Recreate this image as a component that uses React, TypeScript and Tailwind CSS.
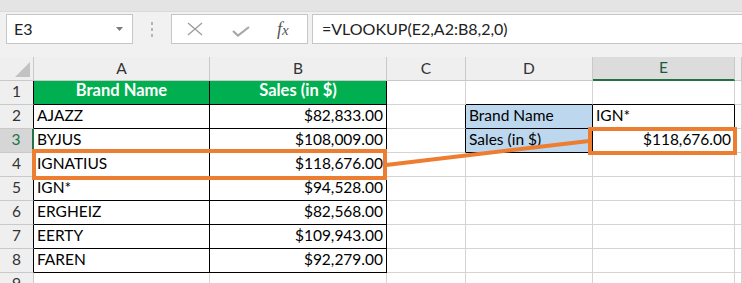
const data: string[][] = [
  ["Brand Name", "Sales (in $)", "", "", ""],
  ["AJAZZ", "$82,833.00", "", "Brand Name", "IGN*"],
  ["BYJUS", "$108,009.00", "", "Sales (in $)", "$118,676.00"],
  ["IGNATIUS", "$118,676.00", "", "", ""],
  ["IGN*", "$94,528.00", "", "", ""],
  ["ERGHEIZ", "$82,568.00", "", "", ""],
  ["EERTY", "$109,943.00", "", "", ""],
  ["FAREN", "$92,279.00", "", "", ""],
  ["", "", "", "", ""],
];

const letters = ["A", "B", "C", "D", "E", ""];

// r: 1-based row, c: 0=A .. 5=F
const cellBorders = (r: number, c: number) => {
  const inTable = r >= 1 && r <= 8 && c <= 1;
  const inLookup = (r === 2 || r === 3) && (c === 3 || c === 4);
  const rightBlack =
    inTable || inLookup || (c === 2 && (r === 2 || r === 3));
  const bottomBlack =
    inTable || inLookup || (r === 1 && (c === 3 || c === 4));
  return `${rightBlack ? "border-r-black" : "border-r-[#d4d4d4]"} ${
    bottomBlack ? "border-b-black" : "border-b-[#d4d4d4]"
  }`;
};

const Toolbar = () => (
  <div className="bg-[#f1f1f1] h-[57px] relative">
    <div className="h-[12px] bg-[#e4e4e4] border-b border-[#dadada]" />
    <div className="flex items-center h-[30px] mt-[2px]">
      <div className="ml-[6px] w-[127px] h-[30px] bg-white border border-[#c6c6c6] flex items-center justify-between pl-[7px] pr-[9px]">
        <span className="text-[16px] text-[#222]">E3</span>
        <svg width="7" height="4" viewBox="0 0 7 4">
          <path d="M0 0 H7 L3.5 4 Z" fill="#7a7a7a" />
        </svg>
      </div>
      <div className="w-[38px] flex flex-col items-center gap-[3px]">
        <span className="w-[2px] h-[3px] bg-[#b5b5b5]" />
        <span className="w-[2px] h-[3px] bg-[#b5b5b5]" />
        <span className="w-[2px] h-[3px] bg-[#b5b5b5]" />
      </div>
      <div className="w-[137px] h-[30px] bg-white border border-[#c6c6c6] flex items-center">
        <svg className="ml-[15px]" width="16" height="14" viewBox="0 0 16 14">
          <path d="M1 1 L15 13 M15 1 L1 13" stroke="#9c9c9c" strokeWidth="1.3" />
        </svg>
        <svg className="ml-[29px] mt-[4px]" width="18" height="11" viewBox="0 0 18 11">
          <path d="M1 5 L6 9.5 L17 1" stroke="#a8a8a8" strokeWidth="2.2" fill="none" />
        </svg>
        <span
          className="ml-[27px] italic text-[18px] text-[#555] leading-none"
          style={{ fontFamily: '"Liberation Serif", serif' }}
        >
          f<span className="text-[15px]">x</span>
        </span>
      </div>
      <div className="ml-[4px] flex-1 h-[30px] bg-white border border-[#c6c6c6] border-r-0 flex items-center pl-[9px]">
        <span className="text-[16px] text-[#222]">=VLOOKUP(E2,A2:B8,2,0)</span>
      </div>
    </div>
  </div>
);

const Sheet = () => (
  <div className="grid grid-cols-[34px_176px_177px_79px_127px_142px_1fr]">
    {/* corner */}
    <div className="h-[24px] bg-[#efefef] border-r border-b border-[#c9c9c9] relative">
      <svg className="absolute left-[15px] top-[5px]" width="15" height="15" viewBox="0 0 15 15">
        <path d="M15 0 V15 H0 Z" fill="#c2c2c2" />
      </svg>
    </div>
    {letters.map((l, i) => (
      <div
        key={`h${i}`}
        className={`h-[24px] border-r border-b flex items-center justify-center text-[15.5px] ${
          i === 4
            ? "bg-[#dcdcdc] border-r-[#c9c9c9] border-b-2 border-b-[#217346] text-[#1e5a39]"
            : "bg-[#efefef] border-[#c9c9c9] text-[#333]"
        }`}
      >
        {l}
      </div>
    ))}
    {data.map((row, ri) => {
      const r = ri + 1;
      return [
        <div
          key={`r${r}`}
          className={`h-[24px] border-b border-b-[#c9c9c9] flex items-end justify-center pb-[1px] text-[15.5px] ${
            r === 3
              ? "bg-[#d6d6d6] border-r-2 border-r-[#217346] text-[#217346]"
              : r <= 8
              ? "bg-[#efefef] border-r border-r-black text-[#333]"
              : "bg-[#efefef] border-r border-r-[#c9c9c9] text-[#333]"
          }`}
        >
          {r}
        </div>,
        ...[0, 1, 2, 3, 4, 5].map((c) => {
          const v = row[c] ?? "";
          const header = r === 1 && c <= 1;
          const blue = (r === 2 || r === 3) && c === 3;
          const right = v.startsWith("$");
          return (
            <div
              key={`c${r}-${c}`}
              className={`h-[24px] border-r border-b flex items-end pb-[1px] whitespace-nowrap overflow-hidden ${cellBorders(
                r,
                c
              )} ${
                header
                  ? "bg-[#00b050] text-white font-bold justify-center text-[16.5px]"
                  : blue
                  ? "bg-[#bdd7ee] text-black pl-[3px] text-[15.5px]"
                  : right
                  ? "bg-white text-black justify-end pr-[3px] text-[15.5px]"
                  : "bg-white text-black pl-[3px] text-[15.5px]"
              }`}
            >
              {v}
            </div>
          );
        }),
      ];
    })}
  </div>
);

export default function App() {
  return (
    <div
      className="relative w-[742px] h-[283px] overflow-hidden bg-white"
      style={{ fontFamily: "Lato, sans-serif" }}
    >
      <Toolbar />
      <Sheet />
      <svg
        className="absolute inset-0 pointer-events-none"
        width="742"
        height="283"
        viewBox="0 0 742 283"
      >
        <rect x="34" y="151" width="351" height="27" fill="none" stroke="#ed7d31" strokeWidth="4" />
        <rect x="590" y="129" width="145" height="24" fill="none" stroke="#ed7d31" strokeWidth="4" />
        <line x1="386" y1="165" x2="589" y2="141" stroke="#ed7d31" strokeWidth="4" />
      </svg>
    </div>
  );
}
